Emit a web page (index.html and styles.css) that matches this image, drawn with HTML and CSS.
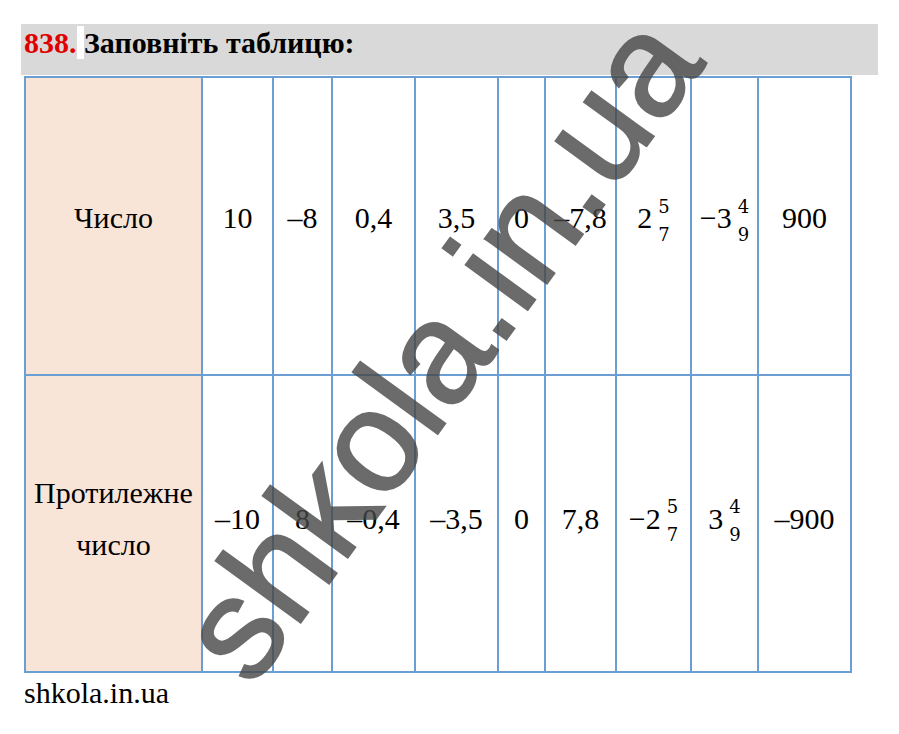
FILE: index.html
```html
<!DOCTYPE html>
<html lang="uk">
<head>
<meta charset="utf-8">
<title>838. Заповніть таблицю</title>
<link rel="stylesheet" href="styles.css">
</head>
<body>
<div class="page">
  <div class="title"><span class="num">838.</span><span class="gap"> </span>Заповніть таблицю:</div>
  <div class="grid">
    <div class="cell head">Число</div>
    <div class="cell">10</div>
    <div class="cell">–8</div>
    <div class="cell">0,4</div>
    <div class="cell">3,5</div>
    <div class="cell">0</div>
    <div class="cell">–7,8</div>
    <div class="cell"><span class="mixed"><span class="whole">2</span><span class="frac"><span>5</span><span>7</span></span></span></div>
    <div class="cell"><span class="mixed"><span class="whole">−3</span><span class="frac"><span>4</span><span>9</span></span></span></div>
    <div class="cell">900</div>

    <div class="cell head two">Протилежне<br>число</div>
    <div class="cell r2">–10</div>
    <div class="cell r2">8</div>
    <div class="cell r2">–0,4</div>
    <div class="cell r2">–3,5</div>
    <div class="cell r2">0</div>
    <div class="cell r2">7,8</div>
    <div class="cell r2"><span class="mixed"><span class="whole">−2</span><span class="frac"><span>5</span><span>7</span></span></span></div>
    <div class="cell r2"><span class="mixed"><span class="whole">3</span><span class="frac"><span>4</span><span>9</span></span></span></div>
    <div class="cell r2">–900</div>
  </div>
  <div class="footer">shkola.in.ua</div>
</div>
<div class="watermark">shkola.in.ua</div>
</body>
</html>
```
FILE: styles.css
```css
html, body {
  margin: 0;
  padding: 0;
  background: #ffffff;
}
body {
  position: relative;
  width: 899px;
  height: 734px;
  overflow: hidden;
  font-family: "Liberation Serif", "Times New Roman", serif;
  color: #000;
}
.page {
  padding: 24px 0 0 21px;
  box-sizing: border-box;
}
.title {
  width: 857px;
  height: 51px;
  box-sizing: border-box;
  background: #d9d9d9;
  padding-left: 3px;
  font-weight: bold;
  font-size: 30px;
  line-height: 37px;
  white-space: nowrap;
}
.title .num {
  color: #e00000;
}
.title .gap {
  background: #ffffff;
  white-space: pre;
}
.grid {
  margin: 1px 0 0 3px;
  width: 828px;
  box-sizing: border-box;
  display: grid;
  grid-template-columns: 175px 69px 57px 81px 81px 45px 69px 73px 65px 91px;
  grid-template-rows: 296px 295px;
  gap: 2px;
  padding: 2px;
  background: #6b9fd4;
}
.cell {
  background: #ffffff;
  display: flex;
  align-items: center;
  justify-content: center;
  font-size: 30px;
  line-height: 52px;
  padding-bottom: 16px;
  box-sizing: border-box;
  white-space: nowrap;
}
.cell.r2 {
  padding-bottom: 10px;
}
.cell.head {
  background: #f9e4d8;
  text-align: center;
}
.cell.two {
  padding-bottom: 10px;
}
.mixed {
  display: inline-flex;
  align-items: center;
  gap: 6px;
}
.frac {
  display: inline-flex;
  flex-direction: column;
  align-items: center;
  font-family: "DejaVu Serif", "Liberation Serif", serif;
  font-size: 18px;
  line-height: 19px;
  padding-top: 4px;
}
.frac span + span {
  margin-top: 9px;
}
.footer {
  margin: 4px 0 0 3px;
  font-size: 30px;
  line-height: 32px;
}
.watermark {
  position: absolute;
  left: 439px;
  top: 347px;
  transform: translate(-50%, -50%) rotate(-54deg);
  font-family: "Liberation Sans", Arial, sans-serif;
  font-size: 145px;
  line-height: 1.2;
  color: #474747;
  -webkit-text-stroke: 2px #474747;
  opacity: 0.8;
  white-space: nowrap;
  pointer-events: none;
}
```
